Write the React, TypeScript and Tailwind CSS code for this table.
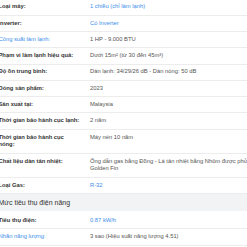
type Row = {
  label: string;
  value: string;
  labelLink?: boolean;
  valueLink?: boolean;
};

const rows1: Row[] = [
  { label: "Loại máy:", value: "1 chiều (chỉ làm lạnh)", valueLink: true },
  { label: "Inverter:", value: "Có Inverter", valueLink: true },
  { label: "Công suất làm lạnh:", value: "1 HP - 9.000 BTU", labelLink: true },
  { label: "Phạm vi làm lạnh hiệu quả:", value: "Dưới 15m² (từ 30 đến 45m³)" },
  { label: "Độ ồn trung bình:", value: "Dàn lạnh: 34/29/26 dB - Dàn nóng: 50 dB" },
  { label: "Dòng sản phẩm:", value: "2023" },
  { label: "Sản xuất tại:", value: "Malaysia" },
  { label: "Thời gian bảo hành cục lạnh:", value: "2 năm" },
  { label: "Thời gian bảo hành cục nóng:", value: "Máy nén 10 năm" },
  {
    label: "Chất liệu dàn tản nhiệt:",
    value: "Ống dẫn gas bằng Đồng - Lá tản nhiệt bằng Nhôm được phủ lớp Golden Fin",
  },
  { label: "Loại Gas:", value: "R-32", valueLink: true },
];

const rows2: Row[] = [
  { label: "Tiêu thụ điện:", value: "0.87 kW/h", valueLink: true },
  { label: "Nhãn năng lượng:", value: "3 sao (Hiệu suất năng lượng 4.51)", labelLink: true },
];

function SpecRow({ row }: { row: Row }) {
  return (
    <li className="flex border-b border-[#ececec] py-[3.8px] leading-[7.7px]">
      <p
        className={
          row.labelLink
            ? "w-[82.3px] shrink-0 text-[#3b8eea]"
            : "w-[82.3px] shrink-0 font-bold text-[#333]"
        }
      >
        {row.label}
      </p>
      <div
        className={
          row.valueLink
            ? "ml-[9.2px] w-[170px] shrink-0 text-[#3b8eea]"
            : "ml-[9.2px] w-[170px] shrink-0 text-[#555]"
        }
      >
        {row.value}
      </div>
    </li>
  );
}

export default function App() {
  return (
    <div className="h-[247px] w-[247px] overflow-hidden bg-white font-['Liberation_Sans',Arial,sans-serif] text-[5.8px]">
      <div className="-ml-[1.5px] -mt-[0.6px] w-[270px]">
        <ul>
          {rows1.map((r) => (
            <SpecRow key={r.label} row={r} />
          ))}
        </ul>
        <h3 className="bg-[#f2f3f5] py-[4px] text-[7px] leading-[9px] text-[#333]">
          Mức tiêu thụ điện năng
        </h3>
        <ul className="pt-[2px]">
          {rows2.map((r) => (
            <SpecRow key={r.label} row={r} />
          ))}
        </ul>
      </div>
    </div>
  );
}
